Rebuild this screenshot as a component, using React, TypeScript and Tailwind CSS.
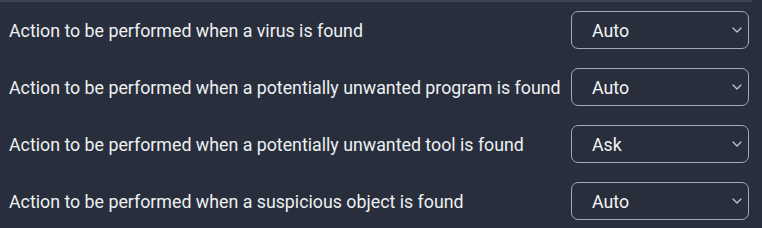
import { ChevronDown } from 'lucide-react';

const rows = [
  { label: 'Action to be performed when a virus is found', value: 'Auto' },
  { label: 'Action to be performed when a potentially unwanted program is found', value: 'Auto' },
  { label: 'Action to be performed when a potentially unwanted tool is found', value: 'Ask' },
  { label: 'Action to be performed when a suspicious object is found', value: 'Auto' },
];

export default function App() {
  return (
    <div className="w-[762px] h-[228px] bg-[#282e3b] font-['Roboto',sans-serif] overflow-hidden">
      <div className="w-[752px] h-[2px] bg-[#3c4352]" />
      <div className="flex flex-col gap-[19px] pt-[9px] pl-[9px] pr-[13px]">
        {rows.map((row) => (
          <div key={row.label} className="flex items-center justify-between h-[38px]">
            <span className="text-[17.8px] text-[#eef0f3] leading-none pt-[1px]">{row.label}</span>
            <div className="w-[178px] h-[38px] shrink-0 flex items-center justify-between pl-[20px] pr-[3px] border border-[#a3a8b1] rounded-[7px]">
              <span className="text-[17.8px] text-[#f3f4f6] leading-none pt-[1px]">{row.value}</span>
              <ChevronDown size={16} strokeWidth={1.8} className="text-[#c5c9d0]" />
            </div>
          </div>
        ))}
      </div>
    </div>
  );
}
